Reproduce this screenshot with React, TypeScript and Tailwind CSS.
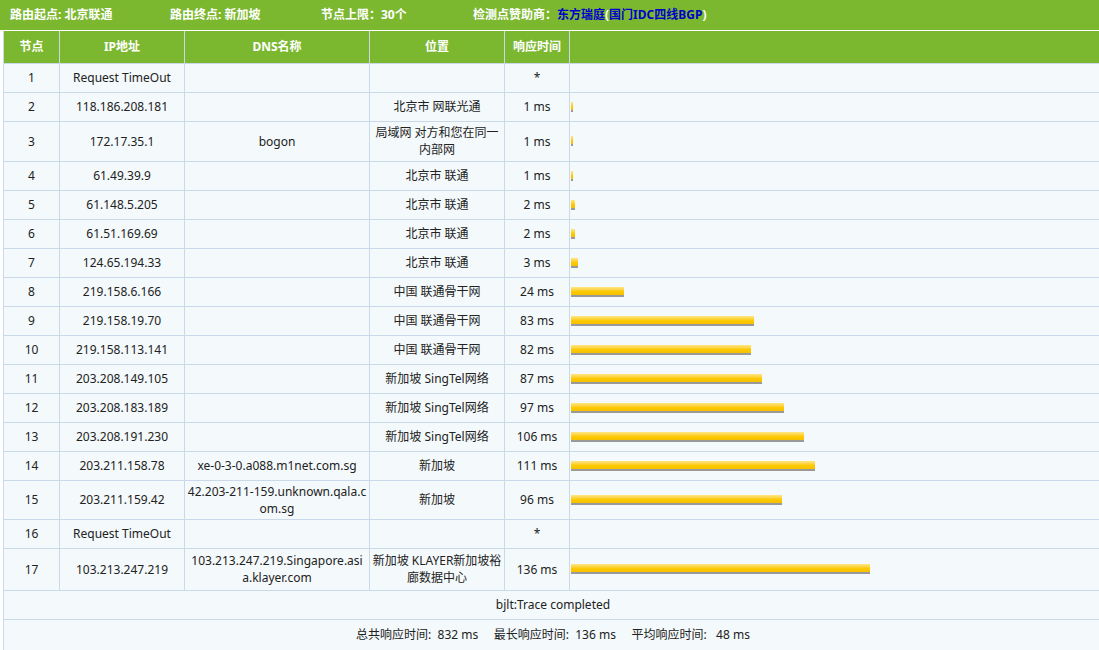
import React from "react";

const rows: [string, string, string, string, string, number, number?][] = [
  ["1", "Request TimeOut", "", "", "*", 0],
  ["2", "118.186.208.181", "", "北京市 网联光通", "1 ms", 1],
  ["3", "172.17.35.1", "bogon", "局域网 对方和您在同一内部网", "1 ms", 1, 40],
  ["4", "61.49.39.9", "", "北京市 联通", "1 ms", 1],
  ["5", "61.148.5.205", "", "北京市 联通", "2 ms", 2],
  ["6", "61.51.169.69", "", "北京市 联通", "2 ms", 2],
  ["7", "124.65.194.33", "", "北京市 联通", "3 ms", 3],
  ["8", "219.158.6.166", "", "中国 联通骨干网", "24 ms", 24],
  ["9", "219.158.19.70", "", "中国 联通骨干网", "83 ms", 83],
  ["10", "219.158.113.141", "", "中国 联通骨干网", "82 ms", 82],
  ["11", "203.208.149.105", "", "新加坡 SingTel网络", "87 ms", 87],
  ["12", "203.208.183.189", "", "新加坡 SingTel网络", "97 ms", 97],
  ["13", "203.208.191.230", "", "新加坡 SingTel网络", "106 ms", 106],
  ["14", "203.211.158.78", "xe-0-3-0.a088.m1net.com.sg", "新加坡", "111 ms", 111],
  ["15", "203.211.159.42", "42.203-211-159.unknown.qala.com.sg", "新加坡", "96 ms", 96, 39],
  ["16", "Request TimeOut", "", "", "*", 0],
  ["17", "103.213.247.219", "103.213.247.219.Singapore.asia.klayer.com", "新加坡 KLAYER新加坡裕廊数据中心", "136 ms", 136, 42],
];

const td = "border border-[#c9d9ea] text-center align-middle px-[2px] leading-[17px] break-all";

export default function App() {
  return (
    <div className="w-[1099px] h-[650px] overflow-hidden bg-white text-[12px] text-[#222]" style={{ fontFamily: '"Noto Sans","Noto Sans CJK SC",sans-serif' }}>
      <div className="h-[30px] bg-[#7cb82f] flex items-center px-[10px] text-white font-bold text-[12px]">
        <span className="w-[160px]">路由起点: 北京联通</span>
        <span className="w-[151px]">路由终点: 新加坡</span>
        <span className="w-[152px]">节点上限：30个</span>
        <span>检测点赞助商：<span className="text-[#0000cc]">东方瑞庭</span><span className="text-[#fff]">(</span><span className="text-[#0000cc]">国门IDC四线BGP</span><span className="text-white">)</span></span>
      </div>
      <div className="pl-[3px] pt-[1px]">
        <table className="border-collapse w-[1100px] table-fixed bg-[#f4f9fb]">
          <colgroup>
            <col className="w-[56px]" />
            <col className="w-[125px]" />
            <col className="w-[185px]" />
            <col className="w-[135px]" />
            <col className="w-[65px]" />
            <col />
          </colgroup>
          <thead>
            <tr className="h-[32px] bg-[#7cb82f] text-white font-bold">
              {["节点", "IP地址", "DNS名称", "位置", "响应时间", ""].map((h, i) => (
                <th key={i} className="border border-[#c9d9ea] border-t-0 font-bold">{h}</th>
              ))}
            </tr>
          </thead>
          <tbody>
            {rows.map((r) => (
              <tr key={r[0]} style={{ height: r[6] ?? 29 }}>
                <td className={td}>{r[0]}</td>
                <td className={td}>{r[1]}</td>
                <td className={td}>{r[2]}</td>
                <td className={td}>{r[3]}</td>
                <td className={td}>{r[4]}</td>
                <td className="border border-[#c9d9ea] align-middle pl-[1px]">
                  {r[5] > 0 && (
                    <div
                      className="h-[10px] bg-gradient-to-b from-[#ffe680] via-[#ffcc00] to-[#f5c000] border-b-2 border-[#999]"
                      style={{ width: Math.max(2, r[5] * 2.2) }}
                    />
                  )}
                </td>
              </tr>
            ))}
            <tr className="h-[29px]">
              <td colSpan={6} className={td}>bjlt:Trace completed</td>
            </tr>
            <tr className="h-[31px]">
              <td colSpan={6} className={td}>
                总共响应时间:&nbsp; 832 ms&nbsp;&nbsp;&nbsp;&nbsp; 最长响应时间:&nbsp; 136 ms&nbsp;&nbsp;&nbsp;&nbsp; 平均响应时间:&nbsp;&nbsp; 48 ms
              </td>
            </tr>
          </tbody>
        </table>
      </div>
    </div>
  );
}
